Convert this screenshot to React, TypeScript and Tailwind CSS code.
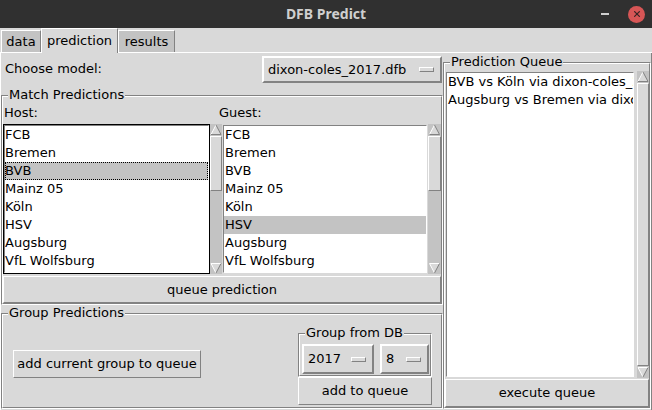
import type { ReactNode } from "react";

// Tk "classic" look: bg #d9d9d9, light shade white, dark shade #828282
const raised = "border border-white border-r-[#828282] border-b-[#828282]";
const raised2 = "border-2 border-white border-r-[#828282] border-b-[#828282]";
const sunken = "border border-[#828282] border-r-white border-b-white";

const teams = ["FCB", "Bremen", "BVB", "Mainz 05", "Köln", "HSV", "Augsburg", "VfL Wolfsburg"];

const queue = [
  "BVB vs Köln via dixon-coles_2017.dfb",
  "Augsburg vs Bremen via dixon-coles_2017.dfb",
];

function GroupBox({
  label,
  className = "",
  children,
}: {
  label: string;
  className?: string;
  children: ReactNode;
}) {
  return (
    <div className={`relative flex flex-col pt-[8px] ${className}`}>
      {/* groove = dark/light outer + light/dark inner */}
      <div className="flex flex-1 flex-col border border-[#828282] border-r-white border-b-white">
        <div className="flex flex-1 flex-col border border-white border-r-[#828282] border-b-[#828282]">
          {children}
        </div>
      </div>
      <span className="absolute left-[7px] top-0 bg-[#d9d9d9] px-[1px] leading-[16px]">{label}</span>
    </div>
  );
}

function TkButton({ label, className = "" }: { label: string; className?: string }) {
  return (
    <div className={`flex items-center justify-center whitespace-nowrap leading-[16px] ${raised} ${className}`}>
      {label}
    </div>
  );
}

function OptionMenu({ value, className = "" }: { value: string; className?: string }) {
  return (
    <div className={`flex items-center justify-between pl-[4px] pr-[6px] ${raised2} ${className}`}>
      <span className="leading-[16px] whitespace-nowrap">{value}</span>
      <div className={`h-[5px] w-[15px] bg-[#d9d9d9] ${raised}`} />
    </div>
  );
}

function Arrow({ down = false }: { down?: boolean }) {
  return (
    <svg viewBox="0 0 12 12" className="block h-[12px] w-full shrink-0">
      {down ? (
        <>
          <polygon points="1,1.5 11,1.5 6,11" fill="#d9d9d9" />
          <line x1="1" y1="1.5" x2="11" y2="1.5" stroke="#ffffff" strokeWidth="1" />
          <line x1="1" y1="1.5" x2="6" y2="11" stroke="#ffffff" strokeWidth="1" />
          <line x1="11" y1="1.5" x2="6" y2="11" stroke="#828282" strokeWidth="1" />
        </>
      ) : (
        <>
          <polygon points="6,1 11,10.5 1,10.5" fill="#d9d9d9" />
          <line x1="6" y1="1" x2="1" y2="10.5" stroke="#ffffff" strokeWidth="1" />
          <line x1="6" y1="1" x2="11" y2="10.5" stroke="#828282" strokeWidth="1" />
          <line x1="1" y1="10.5" x2="11" y2="10.5" stroke="#828282" strokeWidth="1" />
        </>
      )}
    </svg>
  );
}

function Scrollbar({ thumb, fill = false, className = "" }: { thumb?: number; fill?: boolean; className?: string }) {
  return (
    <div className={`flex flex-col bg-[#c3c3c3] ${className}`}>
      <Arrow />
      {fill ? (
        <div className={`flex-1 bg-[#d9d9d9] ${raised}`} />
      ) : (
        <>
          <div className={`shrink-0 bg-[#d9d9d9] ${raised}`} style={{ height: thumb }} />
          <div className="flex-1" />
        </>
      )}
      <Arrow down />
    </div>
  );
}

function Listbox({
  items,
  selected,
  active,
  focused = false,
  className = "",
}: {
  items: string[];
  selected?: number;
  active?: number;
  focused?: boolean;
  className?: string;
}) {
  return (
    <div className={`border ${focused ? "border-black" : "border-[#d9d9d9]"} ${className}`}>
      <div className={`h-full overflow-hidden bg-white ${sunken}`}>
        {items.map((item, i) => (
          <div
            key={item}
            className={`h-[18px] whitespace-nowrap leading-[18px] ${focused ? "" : "pl-[1px]"} ${
              i === selected ? "bg-[#c3c3c3]" : ""
            } ${i === active ? "outline-1 outline-dotted outline-black -outline-offset-1" : ""}`}
          >
            {item}
          </div>
        ))}
      </div>
    </div>
  );
}

function TitleBar() {
  return (
    <div className="grid h-[28px] shrink-0 grid-cols-[1fr_auto_1fr] items-center bg-[#303030]">
      <div />
      <span className="font-['Noto_Sans',sans-serif] text-[14px] font-bold leading-[18px] text-[#cfcfcf]">
        DFB Predict
      </span>
      <div className="flex items-center justify-end gap-[19px] pr-[7px]">
        <div className="h-[2px] w-[8px] bg-[#cfcfcf]" />
        <div className="flex h-[17px] w-[17px] items-center justify-center rounded-full bg-[#d75656]">
          <svg viewBox="0 0 10 10" className="h-[8px] w-[8px]">
            <path d="M2 2 L8 8 M8 2 L2 8" stroke="#3a2424" strokeWidth="1.6" strokeLinecap="round" />
          </svg>
        </div>
      </div>
    </div>
  );
}

function Tabs() {
  const tabs = [
    { name: "data", w: "w-[40px]" },
    { name: "prediction", w: "w-[77px]", on: true },
    { name: "results", w: "w-[57px]" },
  ];
  return (
    <div className="flex h-[25px] shrink-0 items-end border-b border-white pl-[1px]">
      {tabs.map((t) =>
        t.on ? (
          <div
            key={t.name}
            className={`relative z-10 -mb-px flex h-[25px] items-center justify-center border-t border-l border-r border-white border-r-[#828282] bg-[#d9d9d9] leading-[16px] ${t.w}`}
          >
            {t.name}
          </div>
        ) : (
          <div
            key={t.name}
            className={`flex h-[22px] items-center justify-center border-t border-l border-r border-white border-r-[#828282] bg-[#c3c3c3] leading-[16px] ${t.w}`}
          >
            {t.name}
          </div>
        )
      )}
    </div>
  );
}

export default function App() {
  return (
    <div className="flex h-[410px] w-[652px] flex-col overflow-hidden bg-[#d9d9d9] font-['DejaVu_Sans',sans-serif] text-[13px] text-black">
      <TitleBar />
      <Tabs />

      <div className="flex flex-1 border-b border-l border-r border-white border-r-[#828282] border-b-[#828282]">
        {/* left: model + match / group predictions */}
        <div className="flex w-[442px] flex-col">
          <div className="flex h-[34px] shrink-0 items-start">
            <span className="mt-[8px] pl-[4px] leading-[16px]">Choose model:</span>
            <OptionMenu value="dixon-coles_2017.dfb" className="ml-auto mr-[1px] mt-[3px] h-[27px] w-[180px]" />
          </div>

          <GroupBox label="Match Predictions">
            <div className="flex h-[27px]">
              <span className="w-[216px] pl-[1px] pt-[8px] leading-[16px]">Host:</span>
              <span className="pt-[8px] leading-[16px]">Guest:</span>
            </div>
            <div className="flex h-[150px]">
              <Listbox items={teams} selected={2} active={2} focused className="w-[207px]" />
              <Scrollbar thumb={55} className="w-[12px]" />
              <Listbox items={teams} selected={5} className="w-[206px]" />
              <Scrollbar thumb={55} className="w-[13px]" />
            </div>
            <TkButton label="queue prediction" className="mt-[2px] h-[27px]" />
          </GroupBox>

          <GroupBox label="Group Predictions" className="mb-[1px] flex-1">
            <div className="flex flex-1 items-start">
              <TkButton label="add current group to queue" className="ml-[10px] mt-[35px] h-[28px] w-[188px]" />
              <div className="ml-auto mr-[9px] mt-[10px] flex w-[134px] flex-col">
                <GroupBox label="Group from DB">
                  <div className="flex gap-[6px] pb-[1px] pl-[2px] pt-[9px]">
                    <OptionMenu value="2017" className="h-[30px] w-[72px]" />
                    <OptionMenu value="8" className="h-[30px] w-[49px]" />
                  </div>
                </GroupBox>
                <TkButton label="add to queue" className="h-[28px]" />
              </div>
            </div>
          </GroupBox>
        </div>

        {/* right: queue */}
        <div className="flex w-[208px] flex-col">
          <GroupBox label="Prediction Queue" className="mb-[1px] mt-[1px] flex-1">
            <div className="mt-[7px] flex h-[307px]">
              <Listbox items={queue} className="w-[190px]" />
              <div className="flex w-[14px] pl-[2px]">
                <Scrollbar fill className="flex-1" />
              </div>
            </div>
            <TkButton label="execute queue" className="mt-[1px] h-[28px]" />
          </GroupBox>
        </div>
      </div>
    </div>
  );
}
